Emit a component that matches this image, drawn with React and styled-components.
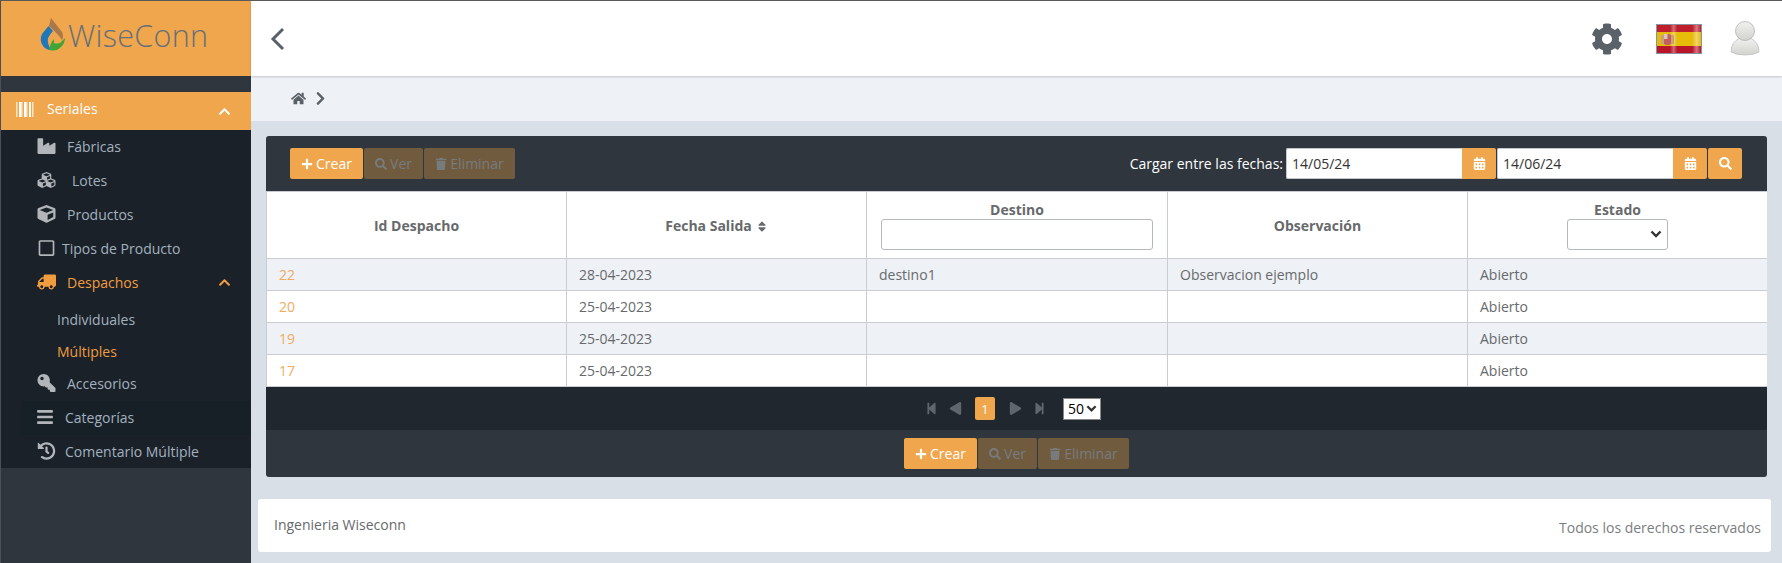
import styled, { createGlobalStyle } from "styled-components";
import {
  FaBars,
  FaCalendarAlt,
  FaChevronRight,
  FaChevronUp,
  FaCog,
  FaCube,
  FaCubes,
  FaHistory,
  FaHome,
  FaIndustry,
  FaKey,
  FaPlay,
  FaPlus,
  FaRegSquare,
  FaSearch,
  FaSort,
  FaStepBackward,
  FaStepForward,
  FaTrash,
  FaTruck,
} from "react-icons/fa";

const GlobalStyle = createGlobalStyle`
  html, body {
    margin: 0;
    padding: 0;
    height: 100%;
    background: #d9dfe7;
    font-family: "Open Sans", "Liberation Sans", sans-serif;
    font-size: 14px;
    color: #676a6c;
  }
  * { box-sizing: border-box; }
`;

const orange = "#f0a64c";
const selectArrow = (size) =>
  `url("data:image/svg+xml,%3Csvg xmlns='http://www.w3.org/2000/svg' width='${size}' height='${size}' viewBox='0 0 12 12'%3E%3Cpath d='M1.5 3.5 L6 8 L10.5 3.5' fill='none' stroke='%23333' stroke-width='2.4'/%3E%3C/svg%3E")`;

const Page = styled.div`
  display: grid;
  grid-template-columns: 251px 1fr;
  height: 563px;
  border-top: 1px solid #5a5a5a;
  overflow: hidden;
`;

const Sidebar = styled.aside`
  background: #2f363e;
  border-left: 1px solid #4a5058;
`;

const LogoBox = styled.div`
  height: 75px;
  background: ${orange};
  display: flex;
  align-items: center;
  padding-left: 38px;
  gap: 3px;
  svg {
    margin-bottom: 9px;
  }
`;

const LogoText = styled.span`
  font-family: "Open Sans", sans-serif;
  font-weight: 300;
  font-size: 30.5px;
  letter-spacing: 0.3px;
  color: #66707a;
  margin-bottom: 8px;
`;

const ActiveSection = styled.div`
  margin-top: 16px;
  height: 38px;
  background: ${orange};
  color: #fff;
  display: flex;
  align-items: center;
  padding: 0 20px 0 15px;
  span {
    margin: 0 0 5px 12px;
    flex: 1;
  }
  svg.stripes {
    margin-bottom: 4px;
  }
`;

const Menu = styled.nav`
  background: #1a2129;
  height: 338px;
`;

const MenuItem = styled.div`
  height: 34px;
  padding-bottom: 2px;
  display: flex;
  align-items: center;
  padding-left: ${(p) => (p.$strip ? 16 : 36)}px;
  margin-left: ${(p) => (p.$strip ? 20 : 0)}px;
  background: ${(p) => (p.$strip ? "#182027" : "transparent")};
  color: ${(p) => (p.$active ? "#f19c3e" : "#a3b1bf")};
  svg.lead {
    width: ${(p) => p.$iconWidth || 19}px;
    height: 18px;
    flex: none;
    color: ${(p) => (p.$active ? "#f19c3e" : "#b2b6bb")};
    transform: ${(p) => (p.$flip ? "scaleX(-1)" : "none")};
  }
  span {
    margin-left: ${(p) => p.$gap || 11}px;
    flex: 1;
  }
  svg.caret {
    width: 13px;
    height: 13px;
    margin-right: 20px;
  }
`;

const SubMenu = styled.div`
  height: 67px;
  padding-top: 4px;
`;

const SubItem = styled.div`
  height: 32px;
  padding-left: 56px;
  line-height: 32px;
  color: ${(p) => (p.$active ? "#f19c3e" : "#a3b1bf")};
`;

const Main = styled.main`
  display: flex;
  flex-direction: column;
  min-width: 0;
`;

const TopBar = styled.header`
  height: 75px;
  background: #fff;
  box-shadow: 0 1px 2px rgba(0, 0, 0, 0.18);
  display: flex;
  align-items: center;
  padding: 0 22px 0 19px;
  position: relative;
`;

const TopIcons = styled.div`
  margin-left: auto;
  display: flex;
  align-items: center;
  color: #5b6168;
`;

const FlagBox = styled.div`
  margin: 0 28px 0 33px;
  display: flex;
`;

const Breadcrumb = styled.div`
  height: 45px;
  background: #eef1f5;
  display: flex;
  align-items: center;
  padding-left: 40px;
  gap: 7px;
  color: #5b6168;
`;

const Panel = styled.section`
  margin: 15px 15px 0;
  background: #2f363e;
  border-radius: 3px;
  overflow: hidden;
`;

const Toolbar = styled.div`
  height: 55px;
  display: flex;
  align-items: center;
  padding: 0 25px 0 24px;
`;

const ButtonGroup = styled.div`
  display: flex;
  gap: 1px;
`;

const ActionButton = styled.button`
  height: 31px;
  width: ${(p) => p.$width}px;
  padding: 0;
  border: 0;
  border-radius: 2px;
  font: inherit;
  display: flex;
  align-items: center;
  justify-content: center;
  gap: 3px;
  background: ${(p) => (p.disabled ? "#705b3f" : orange)};
  color: ${(p) => (p.disabled ? "#777b7e" : "#fff")};
  svg {
    width: 12px;
    height: 12px;
  }
`;

const DateFilter = styled.div`
  margin-left: auto;
  display: flex;
  align-items: center;
  color: #fff;
  gap: 1px;
`;

const DateLabel = styled.span`
  margin-right: 2px;
`;

const DateInput = styled.input`
  width: 176px;
  flex: none;
  height: 31px;
  border: 1px solid #c6c9cc;
  border-right: 0;
  padding: 0 5px;
  font: inherit;
  color: #333;
  background: #fff;
  border-radius: 2px 0 0 2px;
  outline: none;
`;

const AddOn = styled.button`
  width: 34px;
  flex: none;
  height: 31px;
  border: 0;
  padding: 0;
  margin-left: ${(p) => (p.$attached ? -1 : 0)}px;
  background: ${orange};
  color: #fff;
  border-radius: ${(p) => (p.$attached ? "0 2px 2px 0" : "2px")};
  display: flex;
  align-items: center;
  justify-content: center;
  svg {
    width: 13px;
    height: 13px;
  }
`;

const Table = styled.table`
  width: 100%;
  table-layout: fixed;
  border-collapse: collapse;
  background: #fff;
`;

const Th = styled.th`
  height: 67px;
  border: 1px solid #c9cdd2;
  padding: 0;
  font-weight: 700;
  font-size: 14px;
  color: #676a6c;
  vertical-align: middle;
  line-height: 19px;
  svg {
    width: 12px;
    height: 13px;
    margin-left: 4px;
    vertical-align: -2px;
  }
`;

const FilterInput = styled.input`
  display: block;
  width: 272px;
  height: 31px;
  margin: 0 auto 1px;
  border: 1px solid #b5b8bb;
  border-radius: 3px;
  background: #fff;
`;

const FilterSelect = styled.select`
  display: block;
  width: 101px;
  height: 31px;
  margin: 0 auto 1px;
  border: 1px solid #b5b8bb;
  border-radius: 3px;
  appearance: none;
  background: #fff ${selectArrow(12)} no-repeat right 5px center;
`;

const Tr = styled.tr`
  background: ${(p) => (p.$odd ? "#eef1f5" : "#fff")};
`;

const Td = styled.td`
  height: 32px;
  padding: 0 12px;
  border: 1px solid #c9cdd2;
  color: ${(p) => (p.$link ? "#f0ab5e" : "#676a6c")};
`;

const Pager = styled.div`
  height: 43px;
  background: #21272f;
  display: flex;
  align-items: center;
  justify-content: center;
  color: #5f666d;
  padding-right: 13px;
`;

const PagerIcon = styled.span`
  display: flex;
  width: 24px;
  justify-content: center;
  svg {
    width: 13px;
    height: 13px;
    transform: ${(p) => (p.$flip ? "scaleX(-1)" : "none")};
  }
`;

const PageNumber = styled.span`
  width: 20px;
  height: 23px;
  margin: 0 8px;
  background: ${orange};
  color: #fff;
  border-radius: 2px;
  font-size: 13px;
  display: flex;
  align-items: center;
  justify-content: center;
`;

const PageSize = styled.select`
  margin-left: 12px;
  width: 38px;
  height: 22px;
  padding: 0 0 0 4px;
  font-family: inherit;
  font-size: 14px;
  color: #000;
  border: 1px solid #888;
  appearance: none;
  background: #fff ${selectArrow(11)} no-repeat right 3px center;
`;

const BottomBar = styled.div`
  height: 47px;
  padding-bottom: 8px;
  display: flex;
  align-items: flex-end;
  justify-content: center;
`;

const Footer = styled.footer`
  margin: 22px 11px 0 7px;
  height: 53px;
  background: #fff;
  border-radius: 3px;
  display: flex;
  justify-content: space-between;
  padding: 0 10px 0 16px;
`;

const FooterLeft = styled.span`
  margin-top: 16px;
  color: #676a6c;
`;

const FooterRight = styled.span`
  margin-top: 19px;
  color: #7b7e80;
`;

const Logo = () => (
  <svg width="26" height="35" viewBox="5 4 26 35">
    <path d="M17 5 L28 19 Q30 23 28 27 Q24 21 15 13 Z" fill="#a9794c" />
    <path d="M14.5 13 L8 21 Q5 27 9 33 Q12 37 17 37 Q13 30 14 25 Q16 21 19 18 Z" fill="#1f78b8" />
    <path d="M15.5 37 Q22 39 27 34 Q31 30 31 25 L26 30 Q22 31 20 30 L20 26 Q16 30 15.5 37 Z" fill="#3fa535" />
  </svg>
);

const BarcodeStripes = () => (
  <svg className="stripes" width="19" height="15" viewBox="0 0 19 15">
    {[0, 3, 5, 8, 10, 13, 16].map((x, i) => (
      <rect key={x} x={x} width={i % 2 ? 2 : 1.5} height="15" fill={i % 2 ? "#fff" : "#fbe3c4"} />
    ))}
  </svg>
);

const SpainFlag = () => (
  <svg width="46" height="30" viewBox="0 0 46 30">
    <defs>
      <linearGradient id="shine" x1="0" x2="1" y1="0" y2="0">
        <stop offset="0.3" stopColor="#fff" stopOpacity="0" />
        <stop offset="0.38" stopColor="#fff" stopOpacity="0.35" />
        <stop offset="0.46" stopColor="#fff" stopOpacity="0" />
        <stop offset="0.8" stopColor="#fff" stopOpacity="0" />
        <stop offset="0.9" stopColor="#fff" stopOpacity="0.4" />
        <stop offset="1" stopColor="#fff" stopOpacity="0" />
      </linearGradient>
    </defs>
    <rect width="46" height="30" fill="#8a94a0" />
    <rect x="1" y="1" width="44" height="7" fill="#bd1f2d" />
    <rect x="1" y="8" width="44" height="14" fill="#e6bb0a" />
    <rect x="1" y="22" width="44" height="7" fill="#b8152a" />
    <rect x="1" y="1" width="44" height="28" fill="url(#shine)" />
    <rect x="5" y="11" width="3" height="9" fill="#c9a27d" />
    <rect x="15" y="11" width="3" height="9" fill="#c9a27d" />
    <rect x="8" y="10" width="7" height="11" rx="2" fill="#c4605a" />
    <rect x="8" y="10" width="3.5" height="5" fill="#d9c4c0" />
  </svg>
);

const UserAvatar = () => (
  <svg width="30" height="35" viewBox="0 0 30 35">
    <defs>
      <linearGradient id="avatar" x1="0" x2="0" y1="0" y2="1">
        <stop offset="0" stopColor="#f1f1ef" />
        <stop offset="1" stopColor="#d2d2cf" />
      </linearGradient>
    </defs>
    <path d="M10 17 Q1 21 1 31 Q6 34 15 34 Q24 34 29 31 Q29 21 20 17 Z" fill="url(#avatar)" stroke="#b9b9b6" strokeWidth="0.7" />
    <circle cx="15" cy="10" r="9.5" fill="url(#avatar)" stroke="#a9a9a6" strokeWidth="0.7" />
  </svg>
);

const rows = [
  { id: 22, fecha: "28-04-2023", destino: "destino1", obs: "Observacion ejemplo" },
  { id: 20, fecha: "25-04-2023", destino: "", obs: "" },
  { id: 19, fecha: "25-04-2023", destino: "", obs: "" },
  { id: 17, fecha: "25-04-2023", destino: "", obs: "" },
];

const Actions = () => (
  <ButtonGroup>
    <ActionButton $width={73}>
      <FaPlus />
      Crear
    </ActionButton>
    <ActionButton $width={59} disabled>
      <FaSearch />
      Ver
    </ActionButton>
    <ActionButton $width={91} disabled>
      <FaTrash />
      Eliminar
    </ActionButton>
  </ButtonGroup>
);

export default function App() {
  return (
    <>
      <GlobalStyle />
      <Page>
        <Sidebar>
          <LogoBox>
            <Logo />
            <LogoText>WiseConn</LogoText>
          </LogoBox>
          <ActiveSection>
            <BarcodeStripes />
            <span>Seriales</span>
            <FaChevronUp size={13} />
          </ActiveSection>
          <Menu>
            <MenuItem>
              <FaIndustry className="lead" />
              <span>Fábricas</span>
            </MenuItem>
            <MenuItem $gap={16}>
              <FaCubes className="lead" />
              <span>Lotes</span>
            </MenuItem>
            <MenuItem>
              <FaCube className="lead" />
              <span>Productos</span>
            </MenuItem>
            <MenuItem $gap={6}>
              <FaRegSquare className="lead" />
              <span>Tipos de Producto</span>
            </MenuItem>
            <MenuItem $active $flip>
              <FaTruck className="lead" />
              <span>Despachos</span>
              <FaChevronUp className="caret" />
            </MenuItem>
            <SubMenu>
              <SubItem>Individuales</SubItem>
              <SubItem $active>Múltiples</SubItem>
            </SubMenu>
            <MenuItem $flip>
              <FaKey className="lead" />
              <span>Accesorios</span>
            </MenuItem>
            <MenuItem $strip $iconWidth={16} $gap={12}>
              <FaBars className="lead" />
              <span>Categorías</span>
            </MenuItem>
            <MenuItem $gap={9}>
              <FaHistory className="lead" />
              <span>Comentario Múltiple</span>
            </MenuItem>
          </Menu>
        </Sidebar>
        <Main>
          <TopBar>
            <svg width="15" height="24" viewBox="0 0 15 24" fill="none" stroke="#5b6168" strokeWidth="3">
              <path d="M13 2 L3 12 L13 22" />
            </svg>
            <TopIcons>
              <FaCog size={32} />
              <FlagBox>
                <SpainFlag />
              </FlagBox>
              <UserAvatar />
            </TopIcons>
          </TopBar>
          <Breadcrumb>
            <FaHome size={15} />
            <FaChevronRight size={15} />
          </Breadcrumb>
          <Panel>
            <Toolbar>
              <Actions />
              <DateFilter>
                <DateLabel>Cargar entre las fechas:</DateLabel>
                <DateInput defaultValue="14/05/24" />
                <AddOn $attached>
                  <FaCalendarAlt />
                </AddOn>
                <DateInput defaultValue="14/06/24" />
                <AddOn $attached>
                  <FaCalendarAlt />
                </AddOn>
                <AddOn>
                  <FaSearch />
                </AddOn>
              </DateFilter>
            </Toolbar>
            <Table>
              <colgroup>
                <col width="300" />
                <col width="300" />
                <col width="301" />
                <col width="300" />
                <col width="300" />
              </colgroup>
              <thead>
                <tr>
                  <Th>Id Despacho</Th>
                  <Th>
                    Fecha Salida
                    <FaSort />
                  </Th>
                  <Th>
                    Destino
                    <FilterInput />
                  </Th>
                  <Th>Observación</Th>
                  <Th>
                    Estado
                    <FilterSelect />
                  </Th>
                </tr>
              </thead>
              <tbody>
                {rows.map((row, i) => (
                  <Tr key={row.id} $odd={i % 2 === 0}>
                    <Td $link>{row.id}</Td>
                    <Td>{row.fecha}</Td>
                    <Td>{row.destino}</Td>
                    <Td>{row.obs}</Td>
                    <Td>Abierto</Td>
                  </Tr>
                ))}
              </tbody>
            </Table>
            <Pager>
              <PagerIcon>
                <FaStepBackward />
              </PagerIcon>
              <PagerIcon $flip>
                <FaPlay />
              </PagerIcon>
              <PageNumber>1</PageNumber>
              <PagerIcon>
                <FaPlay />
              </PagerIcon>
              <PagerIcon>
                <FaStepForward />
              </PagerIcon>
              <PageSize defaultValue="50">
                <option>50</option>
              </PageSize>
            </Pager>
            <BottomBar>
              <Actions />
            </BottomBar>
          </Panel>
          <Footer>
            <FooterLeft>Ingenieria Wiseconn</FooterLeft>
            <FooterRight>Todos los derechos reservados</FooterRight>
          </Footer>
        </Main>
      </Page>
    </>
  );
}
